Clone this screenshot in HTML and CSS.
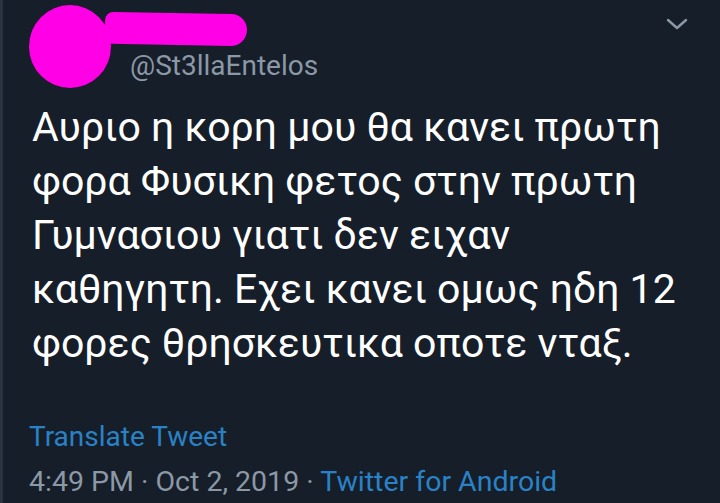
FILE: index.html
```html
<!DOCTYPE html>
<html lang="el">
<head>
<meta charset="UTF-8" />
<meta name="viewport" content="width=device-width, initial-scale=1" />
<title>Tweet</title>
<link rel="stylesheet" href="styles.css">
</head>
<body>

<article class="tweet">
  <header class="tweet-head">
    <div class="avatar"></div>
    <div class="autor">
      <div class="nome-risco"></div>
      <div class="handle">@St3llaEntelos</div>
    </div>
    <svg class="menu" width="22" height="14" viewBox="0 0 22 14">
      <path d="M2 3 L11 11 L20 3" fill="none" stroke="#8b98a5" stroke-width="2.4" stroke-linecap="round" stroke-linejoin="round"/>
    </svg>
  </header>

  <p class="texto">Αυριο η κορη μου θα κανει πρωτη<br>φορα Φυσικη φετος στην πρωτη<br>Γυμνασιου γιατι δεν ειχαν<br>καθηγητη. Εχει κανει ομως ηδη 12<br>φορες θρησκευτικα οποτε νταξ.</p>

  <div class="traduzir">Translate Tweet</div>

  <div class="rodape">
    4:49 PM · Oct 2, 2019 · <span class="app">Twitter for Android</span>
  </div>
</article>

</body>
</html>
```

FILE: styles.css
```css
/* base */
body, html {
  margin: 0; padding: 0;
  background: #161e29;
}
.tweet {
  height: 503px;
  box-sizing: border-box;
  border-left: 3px solid #2a333f;
  padding: 5px 0 0 26px;
  font-family: Roboto, 'Noto Sans', sans-serif;
  color: #fff;
  overflow: hidden;
}

.tweet-head {
  display: flex;
  align-items: flex-start;
  height: 95px;
}
.avatar {
  width: 82px; height: 83px;
  border-radius: 50%;
  background: #ff00e6;
  flex-shrink: 0;
}
.autor {
  display: flex;
  flex-direction: column;
  margin-left: -6px;
}
.nome-risco {
  width: 142px; height: 32px;
  margin-top: 8px;
  background: #ff00e6;
  border-radius: 8px 16px 16px 6px;
  transform: rotate(1deg);
}
.handle {
  margin: 4px 0 0 25px;
  font-size: 28px;
  color: #8b98a5;
}
.menu {
  margin: 12px 0 0 auto;
  margin-right: 32px;
}

.texto {
  margin: 0 0 0 3px;
  font-size: 41px;
  line-height: 54px;
}

.traduzir {
  margin-top: 50px;
  font-size: 28px;
  color: #2a82c6;
}
.rodape {
  margin-top: 12px;
  font-size: 28.5px;
  color: #8b98a5;
}
.app {
  color: #2a82c6;
}
```
